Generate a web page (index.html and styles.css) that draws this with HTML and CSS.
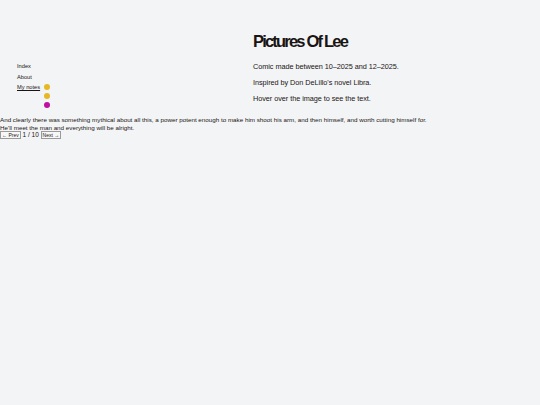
FILE: index.html
```html
<!DOCTYPE html>
<html>
<head>
<meta charset="utf-8">
<link rel="stylesheet" href="styles.css">
</head>
<body>
<div class="top">
  <aside class="side">
    <nav class="nav">
      <a class="nav-link" href="#">Index</a>
      <a class="nav-link" href="#">About</a>
      <a class="nav-link current" href="#">My notes</a>
    </nav>
    <div class="dots">
      <span class="dot yellow"></span>
      <span class="dot yellow"></span>
      <span class="dot magenta"></span>
    </div>
  </aside>
  <main class="intro">
    <h1 class="title">Pictures Of Lee</h1>
    <p class="para">Comic made between 10–2025 and 12–2025.</p>
    <p class="para">Inspired by Don DeLillo's novel Libra.</p>
    <p class="para">Hover over the image to see the text.</p>
  </main>
</div>
<section class="comic">
  <p class="caption">And clearly there was something mythical about all this, a power potent enough to make him shoot his arm, and then himself, and worth cutting himself for.<br>He'll meet the man and everything will be alright.</p>
  <div class="pager"><button class="btn">← Prev</button> <span class="count">1 / 10</span> <button class="btn">Next →</button></div>
</section>
</body>
</html>
```
FILE: styles.css
```css
html, body {
  margin: 0;
  padding: 0;
  background: #f3f4f6;
  color: #1a1414;
  font-family: "Liberation Sans", Arial, sans-serif;
}
.top {
  display: grid;
  grid-template-columns: 253px 1fr;
  padding-top: 31px;
}
.side {
  display: flex;
  align-items: flex-start;
  padding-top: 32px;
  padding-left: 17px;
}
.nav {
  display: flex;
  flex-direction: column;
  gap: 3.5px;
  font-size: 5.7px;
  line-height: 7px;
}
.nav-link {
  color: #1a1414;
  text-decoration: none;
}
.nav-link.current {
  text-decoration: underline;
}
.dots {
  display: flex;
  flex-direction: column;
  gap: 3.2px;
  margin-left: 4px;
  margin-top: 21px;
}
.dot {
  width: 6px;
  height: 6px;
  border-radius: 50%;
}
.yellow { background: #e5b824; }
.magenta { background: #c0119e; }
.intro {
  display: flex;
  flex-direction: column;
}
.title {
  margin: 0 0 12px 0;
  font-size: 16.5px;
  line-height: 20px;
  font-weight: bold;
  letter-spacing: -1.8px;
}
.para {
  margin: 0 0 8px 0;
  font-size: 7.3px;
  line-height: 8px;
  letter-spacing: -0.05px;
}
.comic {
  padding-top: 5px;
}
.caption {
  margin: 0;
  font-size: 6.25px;
  line-height: 7.5px;
}
.pager {
  font-size: 6.5px;
  line-height: 8px;
}
.btn {
  font-family: inherit;
  font-size: 5px;
  padding: 0 1px;
  margin: 0;
  height: 8px;
  border: 1px solid #9a9a9a;
  background: #f7f7f7;
  color: #1a1414;
  border-radius: 0;
  line-height: 5px;
  vertical-align: middle;
}
.count {
  vertical-align: middle;
}
```
